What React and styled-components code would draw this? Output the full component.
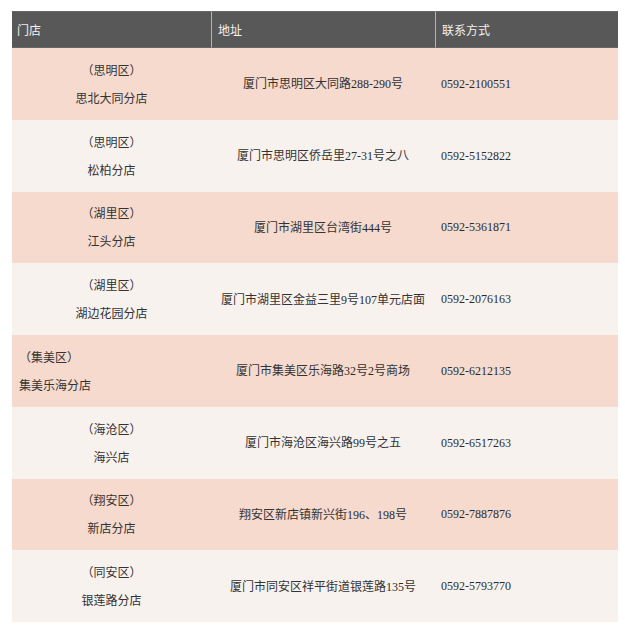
import React from "react";
import styled, { createGlobalStyle } from "styled-components";

const Global = createGlobalStyle`
  html, body { margin: 0; padding: 0; background: #ffffff; }
  body { font-family: "Noto Sans CJK SC", "Noto Sans", sans-serif; }
`;

const Page = styled.div`
  padding: 11px 7px 0 12px;
`;

const Table = styled.div`
  display: grid;
  grid-template-columns: 199px 224px 183px;
  grid-template-rows: 37px;
  grid-auto-rows: 71.75px;
  width: 606px;
`;

const HeadCell = styled.div`
  background: #585858;
  color: #f2f2f2;
  font-size: 12px;
  display: flex;
  align-items: center;
  padding-left: ${(p) => (p.$first ? "5px" : "6px")};
  border-top: 1px solid #666;
  border-bottom: 1px solid #666;
  border-left: ${(p) => (p.$first ? "none" : "1px solid #b4b4b4")};
  box-sizing: border-box;
`;

const Cell = styled.div`
  background: ${(p) => (p.$alt ? "#f8f2ef" : "#f6dace")};
  color: #333333;
  font-size: 12px;
  display: flex;
  flex-direction: column;
  justify-content: center;
  align-items: ${(p) => p.$align || "center"};
  padding-left: ${(p) => p.$pad || "0"};
  box-sizing: border-box;
`;

const Line = styled.div`
  line-height: 28px;
  white-space: nowrap;
`;

const Num = styled.span`
  font-family: "Liberation Serif", serif;
  font-size: 12px;
  color: #2a2a2a;
`;

const Phone = styled(Num)`
  margin-top: 1px;
`;

const withNums = (s) =>
  s.split(/([0-9\-]+)/).map((part, i) =>
    /^[0-9\-]+$/.test(part) ? <Num key={i}>{part}</Num> : part
  );

const stores = [
  { district: "（思明区）", name: "思北大同分店", addr: "厦门市思明区大同路288-290号", tel: "0592-2100551" },
  { district: "（思明区）", name: "松柏分店", addr: "厦门市思明区侨岳里27-31号之八", tel: "0592-5152822" },
  { district: "（湖里区）", name: "江头分店", addr: "厦门市湖里区台湾街444号", tel: "0592-5361871" },
  { district: "（湖里区）", name: "湖边花园分店", addr: "厦门市湖里区金益三里9号107单元店面", tel: "0592-2076163" },
  { district: "（集美区）", name: "集美乐海分店", addr: "厦门市集美区乐海路32号2号商场", tel: "0592-6212135", left: true },
  { district: "（海沧区）", name: "海兴店", addr: "厦门市海沧区海兴路99号之五", tel: "0592-6517263" },
  { district: "（翔安区）", name: "新店分店", addr: "翔安区新店镇新兴街196、198号", tel: "0592-7887876" },
  { district: "（同安区）", name: "银莲路分店", addr: "厦门市同安区祥平街道银莲路135号", tel: "0592-5793770" },
];

export default function App() {
  return (
    <Page>
      <Global />
      <Table>
        <HeadCell $first>门店</HeadCell>
        <HeadCell>地址</HeadCell>
        <HeadCell>联系方式</HeadCell>
        {stores.map((s, i) => {
          const alt = i % 2 === 1;
          return (
            <React.Fragment key={i}>
              <Cell $alt={alt} $align={s.left ? "flex-start" : "center"} $pad={s.left ? "7px" : "0"}>
                <Line>{s.district}</Line>
                <Line>{s.name}</Line>
              </Cell>
              <Cell $alt={alt}>
                <Line>{withNums(s.addr)}</Line>
              </Cell>
              <Cell $alt={alt} $align="flex-start" $pad="6px">
                <Phone>{s.tel}</Phone>
              </Cell>
            </React.Fragment>
          );
        })}
      </Table>
    </Page>
  );
}
